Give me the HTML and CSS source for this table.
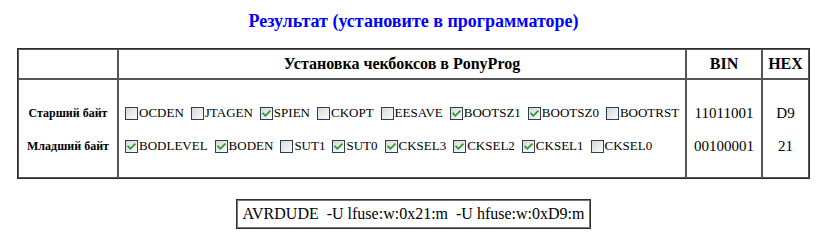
FILE: index.html
```html
<!DOCTYPE html>
<html lang="ru">
<head>
<meta charset="utf-8">
<title>Результат</title>
<link rel="stylesheet" href="styles.css">
</head>
<body>
<div class="page">
  <h1 class="title">Результат (установите в программаторе)</h1>
  <table class="fuses">
    <colgroup>
      <col class="c1"><col class="c2"><col class="c3"><col class="c4">
    </colgroup>
    <thead>
      <tr>
        <th></th>
        <th>Установка чекбоксов в PonyProg</th>
        <th>BIN</th>
        <th>HEX</th>
      </tr>
    </thead>
    <tbody>
      <tr>
        <td class="names">
          <div class="line">Старший байт</div>
          <div class="line">Младший байт</div>
        </td>
        <td class="boxes">
          <div class="line">
            <span class="item"><span class="cb"></span>OCDEN</span>
            <span class="item"><span class="cb"></span>JTAGEN</span>
            <span class="item"><span class="cb on"><svg viewBox="0 0 11 11"><path d="M2.2 5.6 L4.3 7.8 L8.8 3.2" /></svg></span>SPIEN</span>
            <span class="item"><span class="cb"></span>CKOPT</span>
            <span class="item"><span class="cb"></span>EESAVE</span>
            <span class="item"><span class="cb on"><svg viewBox="0 0 11 11"><path d="M2.2 5.6 L4.3 7.8 L8.8 3.2" /></svg></span>BOOTSZ1</span>
            <span class="item"><span class="cb on"><svg viewBox="0 0 11 11"><path d="M2.2 5.6 L4.3 7.8 L8.8 3.2" /></svg></span>BOOTSZ0</span>
            <span class="item"><span class="cb"></span>BOOTRST</span>
          </div>
          <div class="line">
            <span class="item"><span class="cb on"><svg viewBox="0 0 11 11"><path d="M2.2 5.6 L4.3 7.8 L8.8 3.2" /></svg></span>BODLEVEL</span>
            <span class="item"><span class="cb on"><svg viewBox="0 0 11 11"><path d="M2.2 5.6 L4.3 7.8 L8.8 3.2" /></svg></span>BODEN</span>
            <span class="item"><span class="cb"></span>SUT1</span>
            <span class="item"><span class="cb on"><svg viewBox="0 0 11 11"><path d="M2.2 5.6 L4.3 7.8 L8.8 3.2" /></svg></span>SUT0</span>
            <span class="item"><span class="cb on"><svg viewBox="0 0 11 11"><path d="M2.2 5.6 L4.3 7.8 L8.8 3.2" /></svg></span>CKSEL3</span>
            <span class="item"><span class="cb on"><svg viewBox="0 0 11 11"><path d="M2.2 5.6 L4.3 7.8 L8.8 3.2" /></svg></span>CKSEL2</span>
            <span class="item"><span class="cb on"><svg viewBox="0 0 11 11"><path d="M2.2 5.6 L4.3 7.8 L8.8 3.2" /></svg></span>CKSEL1</span>
            <span class="item"><span class="cb"></span>CKSEL0</span>
          </div>
        </td>
        <td class="val">
          <div class="line">11011001</div>
          <div class="line">00100001</div>
        </td>
        <td class="val">
          <div class="line">D9</div>
          <div class="line">21</div>
        </td>
      </tr>
    </tbody>
  </table>
  <div class="cmdwrap">
    <div class="cmd">AVRDUDE&nbsp; -U lfuse:w:0x21:m&nbsp; -U hfuse:w:0xD9:m</div>
  </div>
</div>
</body>
</html>
```

FILE: styles.css
```css
html, body {
  margin: 0;
  padding: 0;
  background: #ffffff;
}

body {
  font-family: "Liberation Serif", "Times New Roman", serif;
  color: #000000;
}

.page {
  width: 793px;
  margin-left: 17px;
}

.title {
  margin: 10px 0 16px 0;
  font-size: 18px;
  line-height: 22px;
  font-weight: bold;
  color: #0000ff;
  text-align: center;
}

.fuses {
  width: 793px;
  table-layout: fixed;
  border-collapse: separate;
  border-spacing: 0;
  border: 1px solid #2e2e2e;
}

.c1 { width: 100px; }
.c2 { width: 568px; }
.c3 { width: 76px; }
.c4 { width: 47px; }

.fuses th,
.fuses td {
  box-sizing: border-box;
  border: 1px solid #555555;
  padding: 0;
  text-align: center;
  vertical-align: middle;
}

.fuses th {
  height: 30px;
  font-size: 16px;
  font-weight: bold;
}

.fuses td {
  height: 99px;
  padding-top: 2px;
}

.line {
  height: 33px;
  display: flex;
  align-items: center;
  justify-content: center;
  white-space: nowrap;
}

.names .line {
  font-size: 12px;
  font-weight: bold;
}

.val .line {
  font-size: 15px;
}

.boxes .line {
  justify-content: flex-start;
  padding-left: 6px;
  gap: 7px;
  font-size: 13px;
}

.item {
  display: inline-flex;
  align-items: center;
}

.cb {
  box-sizing: border-box;
  width: 13px;
  height: 13px;
  margin-right: 1px;
  margin-top: 1px;
  border: 1px solid #2b3e57;
  background: linear-gradient(135deg, #d6d6d6 0%, #ececec 55%, #fbfbfb 100%);
  display: inline-flex;
}

.cb svg {
  width: 11px;
  height: 11px;
}

.cb svg path {
  fill: none;
  stroke: #2a9a2a;
  stroke-width: 1.8;
  stroke-linecap: square;
}

.cmdwrap {
  margin-top: 20px;
  display: flex;
  justify-content: center;
}

.cmd {
  border: 1px solid #2e2e2e;
  box-shadow: inset 0 0 0 1px #777777;
  padding: 0 6px;
  height: 30px;
  box-sizing: border-box;
  display: flex;
  align-items: center;
  font-size: 16px;
  white-space: nowrap;
}
```
